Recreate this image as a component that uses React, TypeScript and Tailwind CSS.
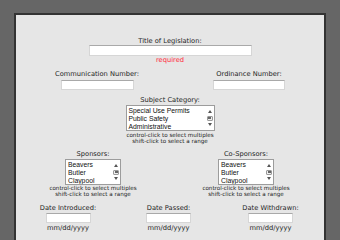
import React from 'react';

const label = 'text-[6.7px] leading-[7px] text-[#1e1e1e] whitespace-nowrap';
const help = 'text-[5.6px] leading-[6px] text-[#222] text-center whitespace-nowrap';
const field = 'bg-white border border-[#d6d6d6] border-t-[#a9a9a9]';

function ScrollBar() {
  return (
    <div className="w-[8px] h-full flex flex-col items-center justify-between py-[4px]">
      <svg width="4" height="3" viewBox="0 0 4 3">
        <path d="M2 0 L4 3 L0 3 Z" fill="#555" />
      </svg>
      <div className="w-[6px] h-[5px] rounded-[1px] border border-[#9a9a9a] bg-[#eee] flex items-center justify-center gap-[0.5px]">
        <span className="w-[0.5px] h-[2px] bg-[#666]" />
        <span className="w-[0.5px] h-[2px] bg-[#666]" />
        <span className="w-[0.5px] h-[2px] bg-[#666]" />
      </div>
      <svg width="4" height="3" viewBox="0 0 4 3">
        <path d="M0 0 L4 0 L2 3 Z" fill="#555" />
      </svg>
    </div>
  );
}

function ListBox({ items, wide }: { items: string[]; wide?: boolean }) {
  return (
    <div
      className={`${wide ? 'w-[89px]' : 'w-[56px]'} h-[26px] bg-white border border-[#9c9c9c] flex overflow-hidden`}
    >
      <div className="flex-1 pl-[2px] pt-[1px] font-['Liberation_Sans',Arial,sans-serif] text-[6.8px] leading-[7.8px] text-[#111]">
        {items.map(i => (
          <div key={i} className="whitespace-nowrap">{i}</div>
        ))}
      </div>
      <ScrollBar />
    </div>
  );
}

function Help() {
  return (
    <div className={help}>
      <div>control-click to select multiples</div>
      <div>shift-click to select a range</div>
    </div>
  );
}

export default function App() {
  const names = ['Beavers', 'Butler', 'Claypool'];
  const dates = [
    { label: 'Date Introduced:', w: 'w-[104px]' },
    { label: 'Date Passed:', w: 'w-[97px]' },
    { label: 'Date Withdrawn:', w: 'w-[107px]' },
  ];

  return (
    <div className="w-[340px] h-[240px] overflow-hidden bg-[#666] pt-[13px] px-[14px] font-['DejaVu_Sans',Verdana,sans-serif]">
      <div className="h-[240px] border-2 border-b-0 border-[#333] bg-[#e6e6e6] pt-[23px] flex flex-col items-center">
        <div className={label}>Title of Legislation:</div>
        <div className={`${field} w-[163px] h-[11px]`} />
        <div className="mt-[1px] text-[6.7px] leading-[7px] text-[#ff2a3c]">required</div>

        <div className="w-full flex mt-[7px]">
          <div className="w-[162px] flex flex-col items-center">
            <div className={label}>Communication Number:</div>
            <div className={`${field} mt-[2px] w-[73px] h-[10px]`} />
          </div>
          <div className="w-[142px] flex flex-col items-center">
            <div className={label}>Ordinance Number:</div>
            <div className={`${field} mt-[2px] w-[72px] h-[10px]`} />
          </div>
        </div>

        <div className={`${label} mt-[7px]`}>Subject Category:</div>
        <div className="mt-[1px]">
          <ListBox wide items={['Special Use Permits', 'Public Safety', 'Administrative']} />
        </div>
        <div className="mt-[1px]">
          <Help />
        </div>

        <div className="w-full flex mt-[7px]">
          <div className="w-[154px] flex flex-col items-center">
            <div className={label}>Sponsors:</div>
            <div className="mt-[1px]">
              <ListBox items={names} />
            </div>
            <Help />
          </div>
          <div className="w-[152px] flex flex-col items-center">
            <div className={label}>Co-Sponsors:</div>
            <div className="mt-[1px]">
              <ListBox items={names} />
            </div>
            <Help />
          </div>
        </div>

        <div className="w-full flex mt-[7.5px]">
          {dates.map(d => (
            <div key={d.label} className={`${d.w} flex flex-col items-center`}>
              <div className={label}>{d.label}</div>
              <div className={`${field} mt-[1.5px] w-[45px] h-[10px]`} />
              <div className={`${label} mt-[1.5px]`}>mm/dd/yyyy</div>
            </div>
          ))}
        </div>
      </div>
    </div>
  );
}
